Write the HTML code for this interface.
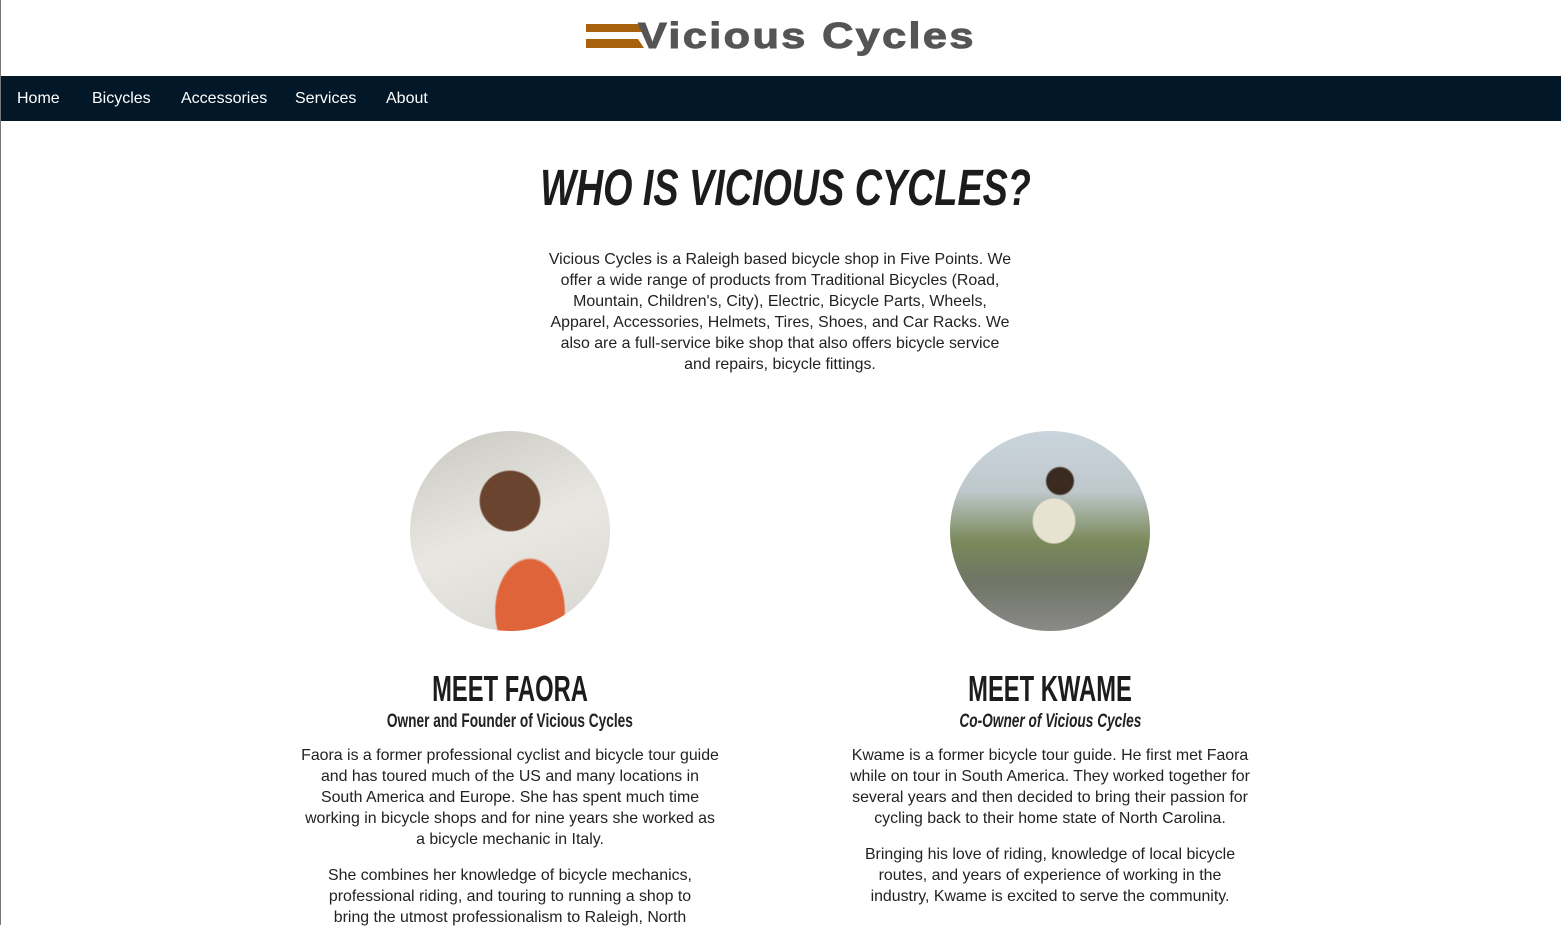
<!DOCTYPE html>
<html><head><style>
body{margin:0;width:1561px;height:925px;overflow:hidden;background:#fff;font-family:"Liberation Sans",sans-serif;color:#222;border-left:1px solid #777;box-sizing:border-box}
.logo{position:absolute;left:586px;top:20px;height:40px}
.lt{position:absolute;left:52px;top:-5px;font-size:36px;font-weight:bold;color:#555;letter-spacing:2px;white-space:nowrap;transform:scaleX(1.2);transform-origin:left;-webkit-text-stroke:1px #555}
nav{position:absolute;top:76px;left:1px;right:0;height:45px;background:#021727}
nav a{position:absolute;top:14px;color:#fff;font-size:16px;text-decoration:none}
.p{position:absolute;text-align:center;font-size:15.9px;line-height:21px;color:#222}
.circ{position:absolute;width:200px;height:200px;border-radius:50%;top:431px}
</style></head><body>
<div class="logo"><svg width="60" height="30" style="position:absolute;left:0;top:4px"><polygon points="0,0 52,0 57,8 0,8" fill="#a8620f"/><polygon points="0,15 52,15 58,24 0,24" fill="#a8620f"/></svg><div class="lt">Vicious Cycles</div></div>
<nav><a style="left:16px">Home</a><a style="left:91px">Bicycles</a><a style="left:180px">Accessories</a><a style="left:294px">Services</a><a style="left:385px">About</a></nav>
<div style="position:absolute;left:5px;width:1561px;top:158px;text-align:center"><span style="display:inline-block;font-size:51px;font-weight:bold;font-style:italic;transform:scaleX(0.74);color:#1c1c1c;white-space:nowrap">WHO IS VICIOUS CYCLES?</span></div>
<div class="p" style="left:547px;width:466px;top:249px">Vicious Cycles is a Raleigh based bicycle shop in Five Points. We offer a wide range of products from Traditional Bicycles (Road, Mountain, Children's, City), Electric, Bicycle Parts, Wheels, Apparel, Accessories, Helmets, Tires, Shoes, and Car Racks. We also are a full-service bike shop that also offers bicycle service and repairs, bicycle fittings.</div>
<div class="circ" style="left:410px;background:radial-gradient(circle at 50% 35%,#6b4430 0 18%,transparent 19%),radial-gradient(ellipse at 60% 90%,#e0643a 0 20%,transparent 21%),linear-gradient(160deg,#c8c8c0,#e9e7e2 50%,#d8d6d0)"></div>
<div class="circ" style="left:950px;background:radial-gradient(circle at 55% 25%,#3a2a20 0 7%,transparent 8%),radial-gradient(ellipse at 52% 45%,#e8e2d0 0 14%,transparent 15%),linear-gradient(180deg,#c9d4dc 0,#bfc8cc 30%,#7a8a5a 55%,#6f7565 75%,#8a8a88 100%)"></div>
<div style="position:absolute;left:260px;width:500px;top:668px;text-align:center"><span style="display:inline-block;font-size:36px;font-weight:bold;transform:scaleX(0.66);color:#1c1c1c">MEET FAORA</span></div>
<div style="position:absolute;left:260px;width:500px;top:711px;text-align:center"><span style="display:inline-block;font-size:19px;font-weight:bold;transform:scaleX(0.72);white-space:nowrap">Owner and Founder of Vicious Cycles</span></div>
<div class="p" style="left:300px;width:420px;top:745px">Faora is a former professional cyclist and bicycle tour guide and has toured much of the US and many locations in South America and Europe. She has spent much time working in bicycle shops and for nine years she worked as a bicycle mechanic in Italy.</div>
<div class="p" style="left:312px;width:396px;top:865px">She combines her knowledge of bicycle mechanics, professional riding, and touring to running a shop to bring the utmost professionalism to Raleigh, North</div>
<div style="position:absolute;left:800px;width:500px;top:668px;text-align:center"><span style="display:inline-block;font-size:36px;font-weight:bold;transform:scaleX(0.66);color:#1c1c1c">MEET KWAME</span></div>
<div style="position:absolute;left:800px;width:500px;top:711px;text-align:center"><span style="display:inline-block;font-size:19px;font-weight:bold;font-style:italic;transform:scaleX(0.72);white-space:nowrap">Co-Owner of Vicious Cycles</span></div>
<div class="p" style="left:835px;width:430px;top:745px">Kwame is a former bicycle tour guide. He first met Faora while on tour in South America. They worked together for several years and then decided to bring their passion for cycling back to their home state of North Carolina.</div>
<div class="p" style="left:850px;width:400px;top:844px">Bringing his love of riding, knowledge of local bicycle routes, and years of experience of working in the industry, Kwame is excited to serve the community.</div>
</body></html>
